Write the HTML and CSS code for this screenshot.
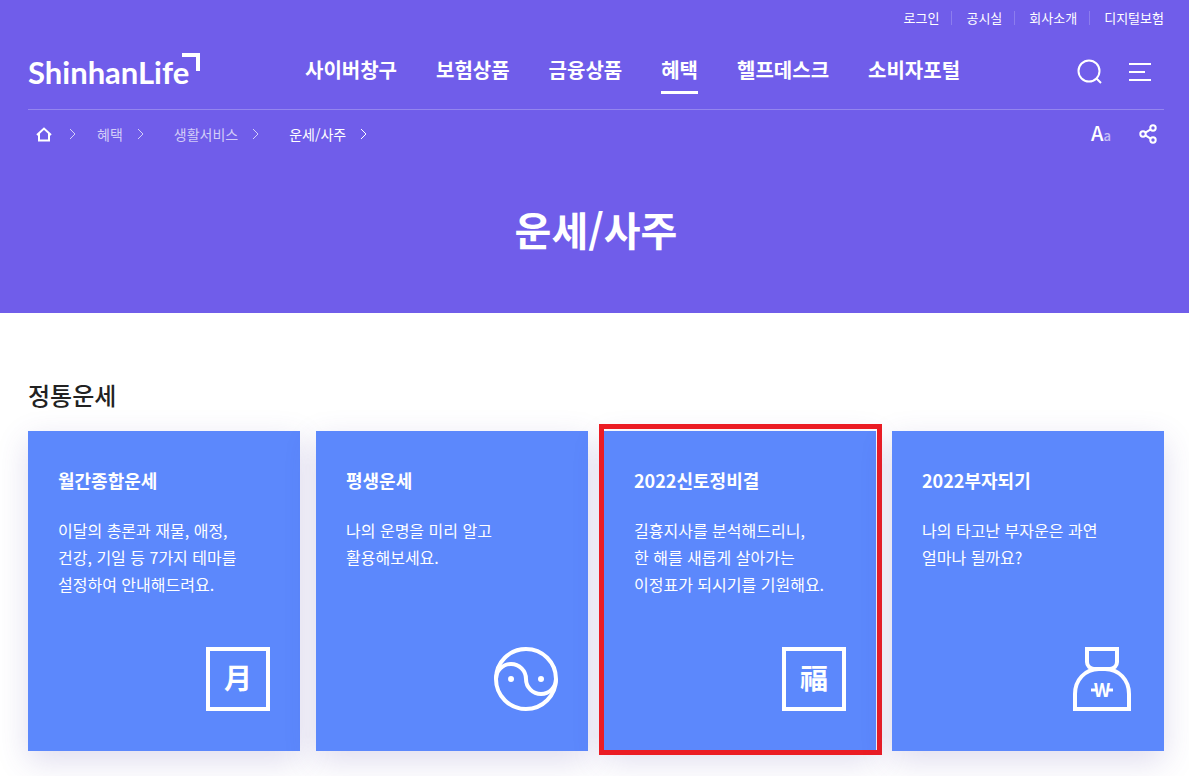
FILE: index.html
```html
<!DOCTYPE html>
<html lang="ko">
<head>
    <meta charset="UTF-8">
    <meta name="viewport" content="width=device-width, initial-scale=1.0">
    <title>운세/사주</title>
    <link rel="stylesheet" href="styles.css">
</head>
<body>
    <header class="header">
        <div class="inner">
            <ul class="util">
                <li><a href="#">로그인</a></li>
                <li><a href="#">공시실</a></li>
                <li><a href="#">회사소개</a></li>
                <li><a href="#">디지털보험</a></li>
            </ul>

            <div class="gnb">
                <a href="#" class="logo">
                    <span>ShinhanLife</span>
                    <svg class="logo-mark" width="18" height="18" viewBox="0 0 18 18"><path d="M0 0h18v18h-4V4H0z" fill="#fff"/></svg>
                </a>
                <nav class="menu">
                    <a href="#">사이버창구</a>
                    <a href="#">보험상품</a>
                    <a href="#">금융상품</a>
                    <a href="#" class="on">혜택</a>
                    <a href="#">헬프데스크</a>
                    <a href="#">소비자포털</a>
                </nav>
                <div class="tools">
                    <button type="button" aria-label="검색">
                        <svg width="26" height="26" viewBox="0 0 26 26" fill="none" stroke="#fff" stroke-width="2"><circle cx="12" cy="12" r="10.5"/><path d="M19.5 19.5l4.5 4.5"/></svg>
                    </button>
                    <button type="button" aria-label="전체메뉴">
                        <svg width="22" height="20" viewBox="0 0 22 20" fill="#fff"><path d="M0 1h22v2H0zM0 9h16v2H0zM0 17h22v2H0z"/></svg>
                    </button>
                </div>
            </div>

            <div class="location">
                <ol class="breadcrumb">
                    <li class="home">
                        <a href="#" aria-label="홈"><svg width="16" height="15" viewBox="0 0 16 15" fill="none" stroke="#fff" stroke-width="2"><path d="M1 8L8 1.5 15 8M3 6.500V13.500H13V6.500"/></svg></a>
                        <svg class="arrow" width="7" height="12" viewBox="0 0 7 12"><path d="M1 1l5 5-5 5"/></svg>
                    </li>
                    <li>
                        <a href="#">혜택</a>
                        <svg class="arrow" width="7" height="12" viewBox="0 0 7 12"><path d="M1 1l5 5-5 5"/></svg>
                    </li>
                    <li>
                        <a href="#">생활서비스</a>
                        <svg class="arrow" width="7" height="12" viewBox="0 0 7 12"><path d="M1 1l5 5-5 5"/></svg>
                    </li>
                    <li class="current">
                        <a href="#">운세/사주</a>
                        <svg class="arrow" width="7" height="12" viewBox="0 0 7 12"><path d="M1 1l5 5-5 5"/></svg>
                    </li>
                </ol>
                <div class="page-tools">
                    <button type="button" class="font-size">A<small>a</small></button>
                    <button type="button" aria-label="공유">
                        <svg width="18" height="20" viewBox="0 0 18 20" fill="none" stroke="#fff" stroke-width="2"><circle cx="4" cy="10" r="2.700"/><circle cx="14" cy="4" r="2.700"/><circle cx="14" cy="16" r="2.700"/><path d="M6.400 8.600l5.200-3.200M6.400 11.400l5.200 3.200"/></svg>
                    </button>
                </div>
            </div>

            <h1>운세/사주</h1>
        </div>
    </header>

    <main class="inner">
        <h2>정통운세</h2>
        <div class="cards">
            <a href="#" class="card">
                <h3>월간종합운세</h3>
                <p>이달의 총론과 재물, 애정,<br>건강, 기일 등 7가지 테마를<br>설정하여 안내해드려요.</p>
                <svg class="icon" viewBox="0 0 64 64">
                    <rect x="2" y="2" width="60" height="60"/>
                    <text x="32" y="42" class="hanja">月</text>
                </svg>
            </a>
            <a href="#" class="card">
                <h3>평생운세</h3>
                <p>나의 운명을 미리 알고<br>활용해보세요.</p>
                <svg class="icon" viewBox="0 0 64 64">
                    <circle cx="32" cy="32" r="30"/>
                    <path d="M2 32a15 15 0 0 1 30 0a15 15 0 0 0 30 0"/>
                    <circle class="dot" cx="17" cy="32" r="3"/>
                    <circle class="dot" cx="47" cy="32" r="3"/>
                </svg>
            </a>
            <a href="#" class="card selected">
                <h3>2022신토정비결</h3>
                <p>길흉지사를 분석해드리니,<br>한 해를 새롭게 살아가는<br>이정표가 되시기를 기원해요.</p>
                <svg class="icon" viewBox="0 0 64 64">
                    <rect x="2" y="2" width="60" height="60"/>
                    <text x="32" y="42" class="hanja">福</text>
                </svg>
            </a>
            <a href="#" class="card">
                <h3>2022부자되기</h3>
                <p>나의 타고난 부자운은 과연<br>얼마나 될까요?</p>
                <svg class="icon" viewBox="0 0 64 64">
                    <path d="M17 2h30v13a7 7 0 0 1-7 7H24a7 7 0 0 1-7-7z"/>
                    <path d="M5 62V47C5 33 15 22 29 22h6c14 0 24 11 24 25v15z"/>
                    <text x="32" y="50" class="won">W</text>
                    <path class="won-bar" d="M21 43h6M37 43h6"/>
                </svg>
            </a>
        </div>
    </main>
</body>
</html>
```

FILE: styles.css
```css
* {
    margin: 0;
    padding: 0;
    box-sizing: border-box;
}

body {
    font-family: "Noto Sans CJK KR", sans-serif;
    background: #fff;
    color: #222;
}

a {
    color: inherit;
    text-decoration: none;
}

ul, ol {
    list-style: none;
}

button {
    display: flex;
    align-items: center;
    background: none;
    border: none;
    color: #fff;
    font-family: inherit;
    cursor: pointer;
}

svg {
    display: block;
}

.inner {
    padding: 0 25px 0 28px;
}

/* header */
.header {
    background: #705dea;
    color: #fff;
    padding-bottom: 54px;
}

.util {
    display: flex;
    justify-content: flex-end;
    align-items: center;
    height: 36px;
    font-size: 13px;
    line-height: 14px;
}

.util li + li {
    margin-left: 12px;
    padding-left: 14px;
    border-left: 1px solid rgba(255, 255, 255, 0.2);
}

.gnb {
    display: flex;
    align-items: center;
    height: 74px;
    padding-bottom: 2px;
    border-bottom: 1px solid rgba(255, 255, 255, 0.25);
}

.logo {
    position: relative;
    width: 172px;
    font-family: Lato, sans-serif;
    font-size: 31px;
    font-weight: 700;
    line-height: 38px;
}

.logo-mark {
    position: absolute;
    top: 0;
    right: 0;
}

.menu {
    display: flex;
    gap: 39px;
    margin-left: 105px;
    font-size: 20px;
    font-weight: 700;
    line-height: 42px;
}

.menu a {
    border-bottom: 3px solid transparent;
}

.menu .on {
    border-color: #fff;
}

.tools {
    display: flex;
    gap: 26px;
    margin-left: auto;
    margin-right: 13px;
}

/* location */
.location {
    display: flex;
    justify-content: space-between;
    align-items: center;
    height: 48px;
    padding: 0 7px 0 8px;
}

.breadcrumb {
    display: flex;
    font-size: 14px;
    line-height: 20px;
}

.breadcrumb li {
    display: flex;
    align-items: center;
    gap: 14px;
    margin-right: 30px;
    color: rgba(255, 255, 255, 0.7);
}

.breadcrumb .home {
    gap: 17px;
    margin-right: 21px;
}

.breadcrumb .current {
    color: #fff;
}

.arrow {
    fill: none;
    stroke: currentColor;
}

.page-tools {
    display: flex;
    gap: 28px;
}

.font-size {
    align-items: baseline;
    font-size: 20px;
    font-weight: 500;
    line-height: 20px;
}

.font-size small {
    font-size: 13px;
    opacity: 0.6;
}

h1 {
    margin-top: 41px;
    font-size: 40px;
    font-weight: 700;
    line-height: 60px;
    text-align: center;
}

/* cards */
h2 {
    padding-top: 64px;
    font-size: 24px;
    font-weight: 500;
    line-height: 36px;
}

.cards {
    display: grid;
    grid-template-columns: repeat(4, 1fr);
    gap: 16px;
    padding: 18px 0 25px;
}

.card {
    position: relative;
    display: flex;
    flex-direction: column;
    min-height: 320px;
    padding: 35px 30px 40px;
    background: #5c88fc;
    color: #fff;
    box-shadow: 0 10px 30px rgba(80, 60, 160, 0.18);
}

.card h3 {
    margin-bottom: 23px;
    font-size: 18px;
    font-weight: 700;
    line-height: 28px;
}

.card p {
    font-size: 16px;
    line-height: 27px;
    white-space: nowrap;
}

.selected::after {
    content: "";
    position: absolute;
    inset: -7px -6px -4px -5px;
    border: 5px solid #eb1c24;
}

.icon {
    width: 64px;
    height: 64px;
    margin-top: auto;
    margin-left: auto;
    fill: none;
    stroke: #fff;
    stroke-width: 4;
}

.icon text,
.icon .dot {
    fill: #fff;
    stroke: none;
}

.icon text {
    text-anchor: middle;
}

.icon .won-bar {
    stroke-width: 3;
}

.hanja {
    font-size: 28px;
    font-weight: 700;
}

.won {
    font-size: 18px;
    font-weight: 700;
}
```
